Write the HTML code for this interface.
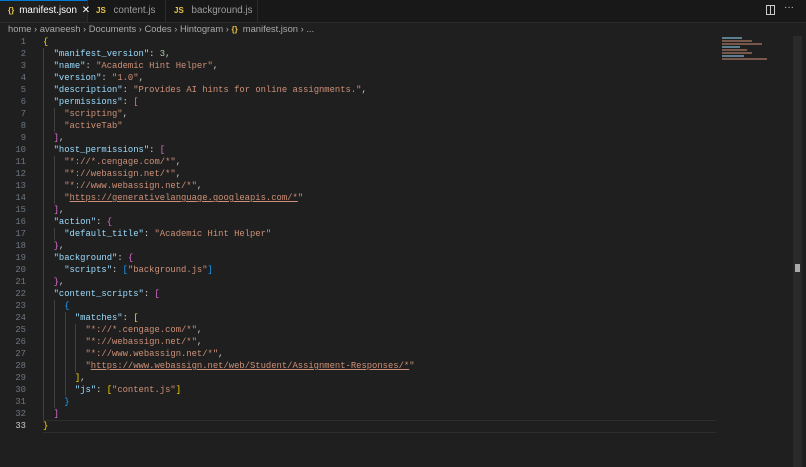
<!DOCTYPE html><html><head><style>
body{margin:0;width:806px;height:467px;background:#1f1f1f;overflow:hidden;font-family:"Liberation Sans",sans-serif;position:relative}
.tabs{position:absolute;top:0;left:0;width:806px;height:22px;background:#181818;border-bottom:1px solid #2b2b2b}
.tab{position:absolute;top:0;height:22px;font-size:9.8px;color:#9d9d9d;line-height:22px;border-right:1px solid #2b2b2b;box-sizing:border-box;padding-left:8px;white-space:nowrap}
.tab.a{background:#1f1f1f;color:#fff;border-top:1px solid #0078d4;line-height:20px}
.ic{color:#e8c547;font-size:8px;font-weight:bold;margin-right:5px}
.crumb{position:absolute;top:22px;left:8px;font-size:9.4px;color:#a9a9a9;line-height:14px;white-space:nowrap}
.code{position:absolute;top:36px;left:0;font-family:"Liberation Mono",monospace;font-size:8.85px;line-height:12px;white-space:pre}
.ln{position:absolute;top:0;left:0;width:26px;text-align:right;color:#6e7681}
.tx{position:absolute;top:0;left:43px;color:#ccc}
.k{color:#9cdcfe}.s{color:#ce9178}.n{color:#b5cea8}.u{color:#ce9178;text-decoration:underline}
.g{color:#ffd700}.p{color:#da70d6}.b{color:#179fff}
.guide{position:absolute;width:1px;background:#404040}
</style></head><body>
<div class="tabs">
<div class="tab a" style="left:0;width:88px"><span class="ic">{}</span>manifest.json <span style="margin-left:2px">✕</span></div>
<div class="tab" style="left:88px;width:78px"><span class="ic">JS</span> content.js</div>
<div class="tab" style="left:166px;width:92px"><span class="ic">JS</span> background.js</div>
<div style="position:absolute;left:766px;top:5px;width:9px;height:10px;border:1px solid #ccc;box-sizing:border-box"><div style="position:absolute;left:3px;top:0;width:1px;height:8px;background:#ccc"></div></div>
<div style="position:absolute;left:784px;top:2px;color:#ccc;font-size:10px">···</div>
</div>
<div class="crumb">home › avaneesh › Documents › Codes › Hintogram › <span class="ic">{}</span>manifest.json › ...</div>
<div style="position:absolute;left:43px;top:420px;width:673px;height:11px;border-top:1px solid #2e2e2e;border-bottom:1px solid #2e2e2e"></div>
<div class="guide" style="left:43px;top:48px;height:372px"></div>
<div class="guide" style="left:54px;top:108px;height:24px"></div>
<div class="guide" style="left:54px;top:156px;height:48px"></div>
<div class="guide" style="left:54px;top:228px;height:12px"></div>
<div class="guide" style="left:54px;top:300px;height:108px"></div>
<div class="guide" style="left:65px;top:312px;height:84px"></div>
<div class="guide" style="left:75px;top:324px;height:48px"></div>
<div class="code"><div class="ln">1
2
3
4
5
6
7
8
9
10
11
12
13
14
15
16
17
18
19
20
21
22
23
24
25
26
27
28
29
30
31
32
<span style="color:#ccc">33</span></div><div class="tx"><span class="g">{</span>
  <span class="k">"manifest_version"</span>: <span class="n">3</span>,
  <span class="k">"name"</span>: <span class="s">"Academic Hint Helper"</span>,
  <span class="k">"version"</span>: <span class="s">"1.0"</span>,
  <span class="k">"description"</span>: <span class="s">"Provides AI hints for online assignments."</span>,
  <span class="k">"permissions"</span>: <span class="p">[</span>
    <span class="s">"scripting"</span>,
    <span class="s">"activeTab"</span>
  <span class="p">]</span>,
  <span class="k">"host_permissions"</span>: <span class="p">[</span>
    <span class="s">"*://*.cengage.com/*"</span>,
    <span class="s">"*://webassign.net/*"</span>,
    <span class="s">"*://www.webassign.net/*"</span>,
    <span class="s">"<span class="u">https://generativelanguage.googleapis.com/*</span>"</span>
  <span class="p">]</span>,
  <span class="k">"action"</span>: <span class="p">{</span>
    <span class="k">"default_title"</span>: <span class="s">"Academic Hint Helper"</span>
  <span class="p">}</span>,
  <span class="k">"background"</span>: <span class="p">{</span>
    <span class="k">"scripts"</span>: <span class="b">[</span><span class="s">"background.js"</span><span class="b">]</span>
  <span class="p">}</span>,
  <span class="k">"content_scripts"</span>: <span class="p">[</span>
    <span class="b">{</span>
      <span class="k">"matches"</span>: <span class="g">[</span>
        <span class="s">"*://*.cengage.com/*"</span>,
        <span class="s">"*://webassign.net/*"</span>,
        <span class="s">"*://www.webassign.net/*"</span>,
        <span class="s">"<span class="u">https://www.webassign.net/web/Student/Assignment-Responses/*</span>"</span>
      <span class="g">]</span>,
      <span class="k">"js"</span>: <span class="g">[</span><span class="s">"content.js"</span><span class="g">]</span>
    <span class="b">}</span>
  <span class="p">]</span>
<span class="g">}</span></div></div>
<div style="position:absolute;left:722px;top:36px;width:50px;height:40px;opacity:.5">
<div style="height:2px;width:20px;background:#9cdcfe;margin:1px 0"></div><div style="height:2px;width:30px;background:#ce9178;margin:1px 0"></div><div style="height:2px;width:40px;background:#ce9178;margin:1px 0"></div><div style="height:2px;width:18px;background:#9cdcfe;margin:1px 0"></div><div style="height:2px;width:25px;background:#ce9178;margin:1px 0"></div><div style="height:2px;width:30px;background:#ce9178;margin:1px 0"></div><div style="height:2px;width:22px;background:#9cdcfe;margin:1px 0"></div><div style="height:2px;width:45px;background:#ce9178;margin:1px 0"></div>
</div>
<div style="position:absolute;left:793px;top:36px;width:9px;height:431px;background:#2a2a2a"></div>
<div style="position:absolute;left:795px;top:264px;width:5px;height:8px;background:#aaa"></div>
</body></html>
